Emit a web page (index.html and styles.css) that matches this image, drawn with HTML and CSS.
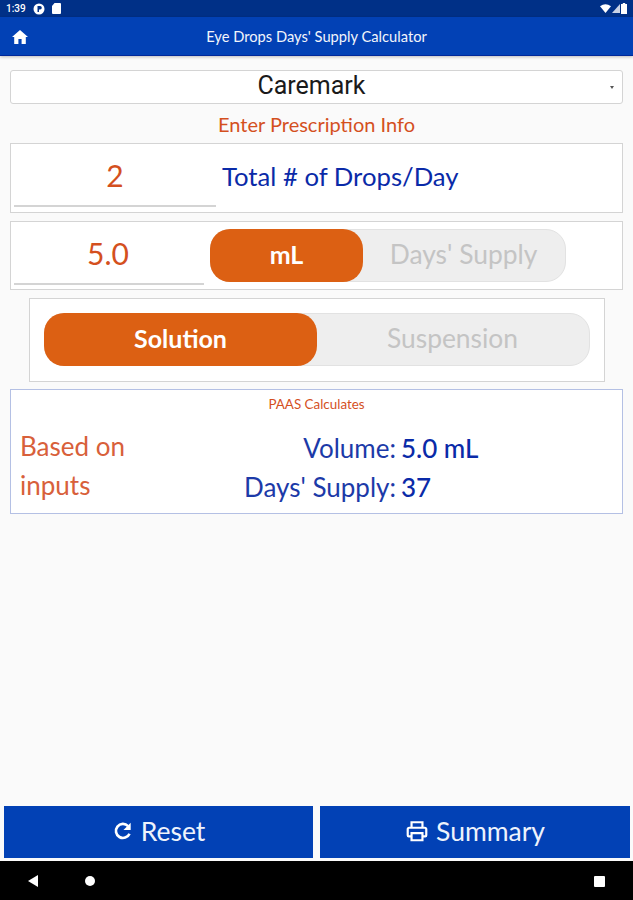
FILE: index.html
```html
<!DOCTYPE html>
<html lang="en">
<head>
    <meta charset="UTF-8">
    <meta name="viewport" content="width=device-width, initial-scale=1.0">
    <title>Eye Drops Days' Supply Calculator</title>
    <link rel="stylesheet" href="styles.css">
</head>
<body>

<div class="screen">
    <div class="status-bar">
        <span class="clock">1:39</span>
        <svg class="status-icon" width="12" height="12" viewBox="0 0 12 12"><circle cx="6" cy="6" r="5.5" fill="#fff"/><path d="M4.5 3h2.6a1.7 1.7 0 0 1 0 3.4H6V9H4.500z" fill="#003087"/></svg>
        <svg class="status-icon" width="9" height="11" viewBox="0 0 9 11"><path d="M2.5 0H8a1 1 0 0 1 1 1v9a1 1 0 0 1-1 1H1a1 1 0 0 1-1-1V3z" fill="#fff"/></svg>
        <span class="status-right">
            <svg width="11" height="9" viewBox="0 0 11 9"><path d="M0 2.2Q5.500-1.600 11 2.200L5.500 9z" fill="#fff"/></svg>
            <svg width="8" height="9" viewBox="0 0 8 9"><path d="M8 0v9H0z" fill="#c9d3e6"/></svg>
            <svg width="6" height="11" viewBox="0 0 6 11"><path d="M1.800 0h2.400v1H6v10H0V1h1.800z" fill="#fff"/></svg>
        </span>
    </div>

    <header class="app-bar">
        <svg class="home-icon" width="16" height="14" viewBox="0 0 16 14"><path d="M8 0l8 7h-2.200v7H9.600V9H6.400v5H2.200V7H0z" fill="#fff"/></svg>
        <h1>Eye Drops Days' Supply Calculator</h1>
    </header>

    <main class="content">
        <div class="select-box">
            <span class="select-value">Caremark</span>
            <span class="select-caret"></span>
        </div>

        <p class="section-label">Enter Prescription Info</p>

        <div class="card card-drops">
            <div class="field field-drops">2</div>
            <span class="field-label">Total # of Drops/Day</span>
        </div>

        <div class="card card-volume">
            <div class="field field-volume">5.0</div>
            <div class="toggle toggle-volume">
                <div class="toggle-option active">mL</div>
                <div class="toggle-option">Days' Supply</div>
            </div>
        </div>

        <div class="card card-type">
            <div class="toggle toggle-type">
                <div class="toggle-option active">Solution</div>
                <div class="toggle-option">Suspension</div>
            </div>
        </div>

        <section class="results">
            <h2>PAAS Calculates</h2>
            <div class="results-body">
                <p class="results-note">Based on<br>inputs</p>
                <div class="results-grid">
                    <span class="result-name">Volume:</span>
                    <span class="result-value">5.0 mL</span>
                    <span class="result-name">Days' Supply:</span>
                    <span class="result-value">37</span>
                </div>
            </div>
        </section>
    </main>

    <footer class="actions">
        <button class="action-button">
            <svg width="22" height="22" viewBox="0 0 20 20"><path d="M15.900 12.400A6.400 6.400 0 1 1 14.600 5.500" fill="none" stroke="#fff" stroke-width="2.400"/><path d="M17 2.400v6.600h-6.600z" fill="#fff"/></svg>
            Reset
        </button>
        <button class="action-button">
            <svg width="24" height="24" viewBox="0 0 22 22"><path d="M6 8V3h10v5M6 16H3.500a1 1 0 0 1-1-1v-5.500a1.500 1.500 0 0 1 1.500-1.500h14a1.500 1.500 0 0 1 1.500 1.500V15a1 1 0 0 1-1 1H16M6 13h10v6.500H6z" fill="none" stroke="#fff" stroke-width="2"/></svg>
            Summary
        </button>
    </footer>

    <nav class="nav-bar">
        <span class="nav-back"></span>
        <span class="nav-home"></span>
        <span class="nav-recent"></span>
    </nav>
</div>

</body>
</html>
```

FILE: styles.css
```css
* {
    box-sizing: border-box;
}

body {
    margin: 0;
    font-family: 'Lato', sans-serif;
    background-color: #fafafa;
}

.screen {
    display: flex;
    flex-direction: column;
    height: 900px;
    overflow: hidden;
}

/* status bar */
.status-bar {
    display: flex;
    align-items: center;
    gap: 7px;
    height: 17px;
    padding: 0 6px;
    background-color: #003087;
    color: #fff;
}

.clock {
    font-family: 'Roboto', sans-serif;
    font-size: 10px;
    font-weight: 500;
}

.status-right {
    display: flex;
    align-items: center;
    gap: 1px;
    margin-left: auto;
}

/* app bar */
.app-bar {
    position: relative;
    display: flex;
    align-items: center;
    justify-content: center;
    height: 39px;
    background-color: #0241b5;
    border-bottom: 1px solid #00289a;
    box-shadow: 0 1px 3px rgba(0, 0, 0, 0.25);
}

.app-bar h1 {
    margin: 0;
    font-size: 14.7px;
    font-weight: 400;
    color: #f2f5fb;
}

.home-icon {
    position: absolute;
    left: 12px;
    top: 13px;
}

/* form */
.content {
    flex: 1;
    padding: 14px 10px 0;
}

.select-box {
    display: flex;
    align-items: center;
    justify-content: center;
    position: relative;
    height: 34px;
    padding: 0 10px 3px 0;
    background: #fff;
    border: 1px solid #d4d4d4;
    border-radius: 3px;
}

.select-value {
    font-family: 'Roboto', sans-serif;
    font-size: 25px;
    color: #1a1a1a;
}

.select-caret {
    position: absolute;
    right: 8px;
    top: 15px;
    border-left: 2px solid transparent;
    border-right: 2px solid transparent;
    border-top: 3px solid #555;
}

.section-label {
    margin: 0;
    height: 39px;
    line-height: 41px;
    text-align: center;
    font-size: 20px;
    color: #d4501e;
}

.card {
    display: flex;
    background: #fff;
    border: 1px solid #d4d4d4;
}

.card-drops {
    height: 70px;
    padding: 0 3px;
    margin-bottom: 8px;
}

.card-volume {
    height: 69px;
    padding: 0 3px;
    margin-bottom: 8px;
}

.card-type {
    height: 84px;
    margin: 0 18px 7px 19px;
    padding: 14px;
}

.field {
    display: flex;
    align-items: center;
    justify-content: center;
    border-bottom: 2px solid #d4d4d4;
    font-size: 30px;
    color: #d4501e;
}

.field-drops {
    width: 202px;
    height: 63px;
}

.field-volume {
    width: 190px;
    height: 63px;
    padding-right: 2px;
}

.field-label {
    margin: 15px 0 0 6px;
    font-size: 25.7px;
    line-height: 34px;
    color: #0a2aa8;
}

/* two-way toggles */
.toggle {
    display: flex;
    height: 53px;
    padding-bottom: 3px;
    background-color: #eeeeee;
    border: 1px solid #e2e2e2;
    border-radius: 20px;
    font-size: 26.4px;
}

.toggle-volume {
    width: 356px;
    margin: 7px 0 0 6px;
}

.toggle-type {
    width: 546px;
}

.toggle-option {
    flex: 1;
    display: flex;
    align-items: center;
    justify-content: center;
    color: #c4c4c4;
}

.toggle-option.active {
    margin: -1px -1px -4px;
    padding-bottom: 3px;
    border-radius: 20px;
    background-color: #dc6013;
    color: #fff;
    font-size: 25px;
    font-weight: 700;
}

.toggle-volume .toggle-option.active {
    flex: 0 0 153px;
}

.toggle-type .toggle-option.active {
    flex: 0 0 273px;
}

/* results */
.results {
    height: 125px;
    background: #fff;
    border: 1px solid #b4c0e4;
}

.results h2 {
    margin: 0;
    padding-top: 7px;
    text-align: center;
    font-size: 13.4px;
    line-height: 15px;
    font-weight: 400;
    color: #d4501e;
}

.results-body {
    display: flex;
    margin-top: 15px;
    padding-left: 9px;
    font-size: 26px;
    line-height: 39px;
}

.results-note {
    margin: 0;
    color: #d8603a;
}

.results-grid {
    display: grid;
    grid-template-columns: 271px auto;
    column-gap: 5px;
    margin-top: 2px;
}

.result-name {
    text-align: right;
    color: #1c3aa8;
}

.result-value {
    color: #0a2aa8;
    font-weight: 500;
}

/* bottom buttons */
.actions {
    display: grid;
    grid-template-columns: 309px 310px;
    column-gap: 7px;
    padding: 0 3px 3px 4px;
}

.action-button {
    display: flex;
    align-items: center;
    justify-content: center;
    gap: 7px;
    height: 52px;
    padding: 0 0 2px;
    border: none;
    background-color: #0241b5;
    color: #eef3fc;
    font-family: 'Lato', sans-serif;
    font-size: 26.5px;
}

/* android nav */
.nav-bar {
    position: relative;
    height: 39px;
    background-color: #000;
}

.nav-back {
    position: absolute;
    left: 28px;
    top: 14px;
    border-top: 6px solid transparent;
    border-bottom: 6px solid transparent;
    border-right: 10px solid #fff;
}

.nav-home {
    position: absolute;
    left: 85px;
    top: 15px;
    width: 10px;
    height: 10px;
    border-radius: 50%;
    background: #fff;
}

.nav-recent {
    position: absolute;
    left: 594px;
    top: 15px;
    width: 11px;
    height: 11px;
    border-radius: 1px;
    background: #fff;
}
```
